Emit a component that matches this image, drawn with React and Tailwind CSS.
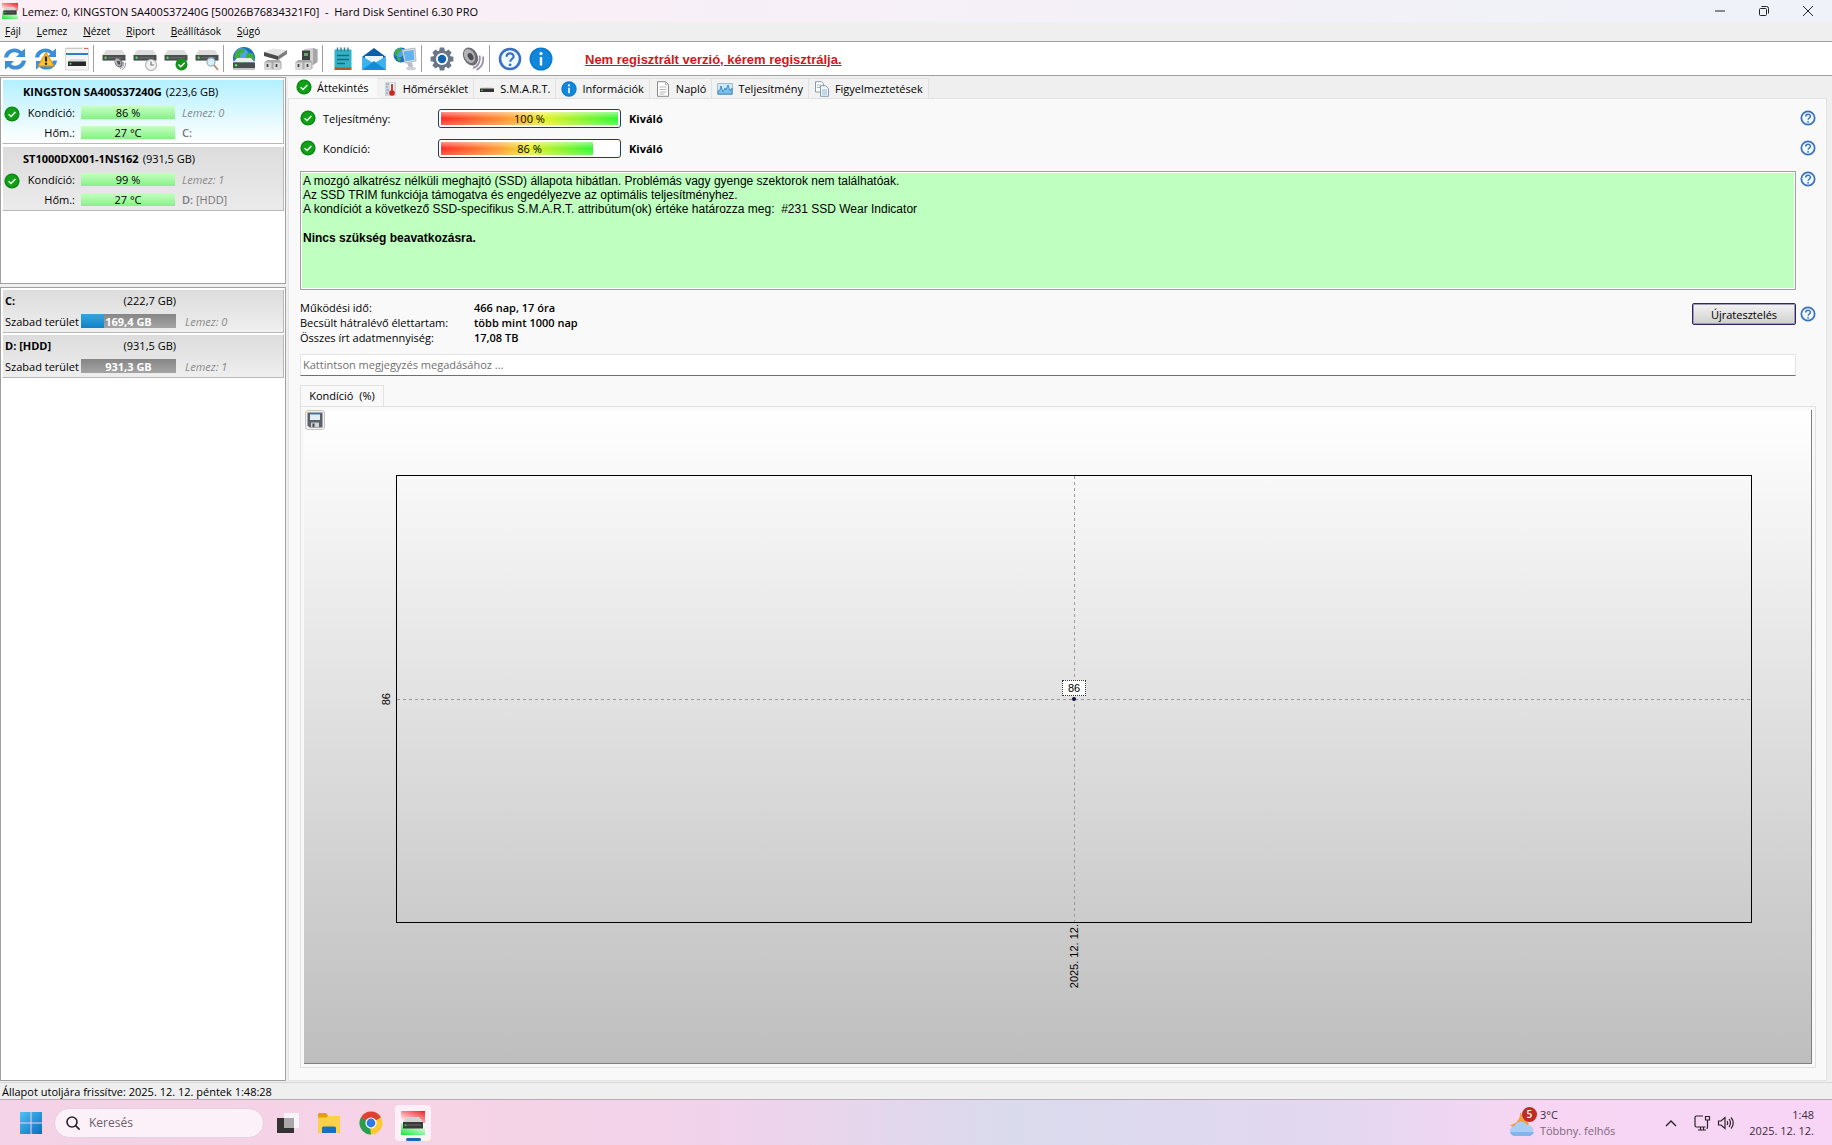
import React, { useState } from 'react';

const ARIAL = 'font-["Liberation_Sans",Arial,sans-serif]';

/* ---------- Icons ---------- */

function CheckIcon({ className = 'size-4' }) {
    return (
        <svg viewBox="0 0 16 16" className={className}>
            <circle cx="8" cy="8" r="7.6" fill="#0c8a12" />
            <circle cx="8" cy="8" r="6" fill="#12a01a" />
            <path d="M4.6 8.2 7 10.5l4.4-4.6" fill="none" stroke="#e9ffe6" strokeWidth="1.5" />
        </svg>
    );
}

function HelpIcon({ className = 'size-4' }) {
    return (
        <svg viewBox="0 0 24 24" className={className}>
            <circle cx="12" cy="12" r="10" fill="#eefaff" stroke="#3b6fc4" strokeWidth="2.6" />
            <path d="M8.6 9.8c0-4.6 7-4.4 7-.4 0 2.6-3.4 2.6-3.4 5.4" fill="none" stroke="#3b6fc4" strokeWidth="2.2" />
            <circle cx="12.1" cy="17.8" r="1.4" fill="#3b6fc4" />
        </svg>
    );
}

function InfoIcon({ className = 'size-4' }) {
    return (
        <svg viewBox="0 0 24 24" className={className}>
            <circle cx="12" cy="12" r="11.5" fill="#0a7bd0" />
            <circle cx="12" cy="12" r="9.8" fill="#1187dc" />
            <circle cx="12" cy="6.6" r="1.6" fill="#fff" />
            <path d="M12 10v8.5" stroke="#fff" strokeWidth="2.4" />
        </svg>
    );
}

function SentinelIcon({ className }) {
    return (
        <svg viewBox="0 0 24 24" className={className}>
            <defs>
                <linearGradient id="sen-a" x1="0.2" y1="1" x2="1" y2="0">
                    <stop offset="0" stopColor="#fff" />
                    <stop offset="1" stopColor="#ee1c24" />
                </linearGradient>
                <linearGradient id="sen-b" x1="0" y1="1" x2="0.7" y2="0">
                    <stop offset="0" stopColor="#14e632" />
                    <stop offset="1" stopColor="#fff" />
                </linearGradient>
            </defs>
            <path d="M0 0h24v12H0z" fill="url(#sen-a)" />
            <path d="M0 12h24v12H0z" fill="url(#sen-b)" />
            <path d="M6 6h12l4 5H2z" fill="#d4d4d4" />
            <path d="M2 11h20v6.500H2z" fill="#3a3a3a" />
            <path d="M6 14h14" stroke="#6a6a6a" strokeWidth="1" />
            <circle cx="4.500" cy="14.200" r="1" fill="#3ce04a" />
        </svg>
    );
}

function RefreshArrows() {
    return (
        <g fill="#3a8fd6">
            <path d="M1 10.5C1.6 5 6 1.4 11.5 1.4c3 0 5.3 1 7.2 2.9L22 1.5v8.6h-9l3.2-3C15 6 13.5 5.3 11.6 5.3c-3.2 0-5.8 2-6.5 5.2z" />
            <path d="M23 13.5C22.4 19 18 22.6 12.5 22.6c-3 0-5.3-1-7.2-2.9L2 22.5v-8.6h9l-3.2 3c1.2 1.1 2.7 1.8 4.6 1.8 3.2 0 5.8-2 6.5-5.2z" />
        </g>
    );
}

function Drive() {
    return (
        <>
            <path d="M4 3h16l3.5 5H.5z" fill="#dcdcdc" />
            <path d="M.5 8h23v5.6H.5z" fill="#4a4f50" />
            <path d="M6 10.8h15" stroke="#6c7172" strokeWidth="1" />
            <circle cx="3.6" cy="10.8" r="1.2" fill="#55dd55" />
        </>
    );
}

function Speaker() {
    return (
        <>
            <ellipse cx="9.5" cy="9.5" rx="7" ry="9.500" transform="rotate(-28 9.5 9.5)" fill="#6e6e70" />
            <ellipse cx="8.500" cy="9" rx="5" ry="7.400" transform="rotate(-28 8.5 9)" fill="#b4b4b6" />
            <ellipse cx="9.600" cy="9.600" rx="2.600" ry="3.800" transform="rotate(-28 9.6 9.6)" fill="#4c4c50" />
            <path d="M12 21c4.500-1 8-6 6.500-12.500M15.500 23c4.500-2.500 7.500-7.500 6.500-13.500" fill="none" stroke="#9a90aa" strokeWidth="1.800" />
        </>
    );
}

function Globe({ cx, cy, r }) {
    return (
        <g transform={`translate(${cx - r} ${cy - r}) scale(${r / 10})`}>
            <circle cx="10" cy="10" r="10" fill="#1c6fc8" />
            <circle cx="8" cy="7" r="6" fill="#4ba4ec" />
            <path d="M3 4c3-3 6-3 8-2l-1 3-3 1-1 4-3 1-2-2zM13 5l5 1 1.500 5-3 4-3-2-2-4z" fill="#3fae3a" />
            <path d="M5 12l4 1 1 3-2 3-3-3z" fill="#3fae3a" />
        </g>
    );
}

// Connector block shared by the two "attached disk" icons
function Plug() {
    return (
        <>
            <path d="m1.500 15 3-2h12l2 2v6.500l-1.500 1H1.500z" fill="#a9a9a9" />
            <path d="M1.500 15.500h7v7h-7zM10.500 15.500h7v7h-7z" fill="#d6d6d6" />
            <path d="M4.500 17v3M13.500 17v3" stroke="#3c3c3c" strokeWidth="1.600" />
        </>
    );
}

const icons = {
    refresh: <RefreshArrows />,
    refreshWarn: (
        <>
            <RefreshArrows />
            <path d="M12 5.500 20 19H4z" fill="#ffc52e" stroke="#e8960c" strokeWidth="1.200" strokeLinejoin="round" />
            <path d="M12 9.500v5" stroke="#222" strokeWidth="2.200" />
            <circle cx="12" cy="16.800" r="1.200" fill="#222" />
        </>
    ),
    details: (
        <>
            <path d="M.5 1h23v22H.5z" fill="#f4f4f4" stroke="#dadada" />
            <path d="M1 1.500h16" stroke="#c9c9c9" />
            <path d="M19 1.500h4" stroke="#d9694a" />
            <path d="M1 7h22" stroke="#2f7fc4" strokeWidth="2" />
            <path d="M5 12h14l2 3H3z" fill="#dcdcdc" />
            <path d="M3 14.500h18V19H3z" fill="#262a2a" />
            <circle cx="5.500" cy="16.800" r="1" fill="#5e5" />
        </>
    ),
    diskSound: (
        <>
            <Drive />
            <g transform="translate(11.500 10.500) scale(.54)"><Speaker /></g>
        </>
    ),
    diskClock: (
        <>
            <Drive />
            <circle cx="18" cy="18" r="5.500" fill="#f2f2f2" stroke="#b5b5b5" strokeWidth="1.200" />
            <path d="M18 14.500V18h3" fill="none" stroke="#777" strokeWidth="1.200" />
        </>
    ),
    diskCheck: (
        <>
            <Drive />
            <circle cx="17.500" cy="17.500" r="6" fill="#12941a" />
            <path d="m14.500 17.500 2.200 2.200 4-4" fill="none" stroke="#fff" strokeWidth="1.500" />
        </>
    ),
    diskSearch: (
        <>
            <Drive />
            <circle cx="16" cy="15" r="4" fill="#d8eefa" stroke="#9ab2c4" strokeWidth="1.300" />
            <path d="m19 18 4 5" stroke="#b88a70" strokeWidth="1.800" />
        </>
    ),
    diskGlobe: (
        <>
            <Globe cx={12} cy={11} r={11} />
            <path d="M5 11h14l4 4.500H1z" fill="#ececec" />
            <path d="M1 15.500h22V21H1z" fill="#4a4e4e" />
            <path d="M1 22h22" stroke="#c4c4c4" strokeWidth="2" />
            <circle cx="4" cy="18.300" r="1.200" fill="#5e5" />
        </>
    ),
    diskUsers: (
        <>
            <path d="m1 5 9-3.500L24 3l-9 6z" fill="#e4e4e4" />
            <path d="m1 5 14 4v4L1 9z" fill="#4c4c4c" />
            <path d="m15 9 9-6v4l-9 6z" fill="#7c7c7c" />
            <Plug />
        </>
    ),
    diskTower: (
        <>
            <path d="m10 2 9-1 4.500 1.500V15L19 18h-9z" fill="#cfcfcf" />
            <path d="m19 1 4.500 1.500V15L19 18z" fill="#a6a6a6" />
            <path d="M8 3.500h8V14H8z" fill="#3e4242" />
            <path d="M10 6h4v3h-4z" fill="#63a863" />
            <Plug />
        </>
    ),
    notepad: (
        <>
            <path d="M3.500 2.500h17V21h-17z" fill="#34b3c8" />
            <path d="M3.500 20.500h17V23h-17z" fill="#b3562c" />
            <path d="M6.500.5v4M10 .5v4M13.500.5v4M17 .5v4" stroke="#2c7f92" strokeWidth="1.400" />
            <path d="M6 8.500h12M6 12.500h12M6 16.500h8" stroke="#0e6b80" strokeWidth="1.500" />
        </>
    ),
    mail: (
        <>
            <path d="M.5 9.500 12 1l11.500 8.500V23H.5z" fill="#0b5fa8" />
            <path d="M3 9h18v8H3z" fill="#e8f5ff" />
            <path d="M.5 9.500 12 16.500 23.500 9.500V23H.5z" fill="#3bb0ee" />
            <path d="M.5 23 12 14l11.500 9z" fill="#148ad8" />
        </>
    ),
    network: (
        <>
            <Globe cx={8} cy={8} r={7.5} />
            <path d="m9 3 13-2 1 13-11 2z" fill="#d8dce0" stroke="#a9afb8" strokeWidth=".8" />
            <path d="m10.500 4.500 10-1.600.8 9.800-8.600 1.500z" fill="#5fb4f0" />
            <path d="m14 16 5-1 1 5-4 1z" fill="#b9bec8" />
            <ellipse cx="18" cy="21.500" rx="5" ry="1.800" fill="#cdd0d8" />
        </>
    ),
    gear: (
        <>
            <g fill="#6b7786">
                <circle cx="12" cy="12" r="8.800" />
                {[0, 45, 90, 135].map((angle) => (
                    <path key={angle} d="M9.800.6h4.400l.8 4h-6zM9.800 23.400h4.400l.8-4h-6z" transform={`rotate(${angle} 12 12)`} />
                ))}
            </g>
            <circle cx="12" cy="12" r="6" fill="#fff" />
            <circle cx="12" cy="12" r="4.200" fill="#1562ae" />
        </>
    ),
    speaker: <Speaker />,
};

function ToolIcon({ name }) {
    if (name === 'help') return <HelpIcon className="size-6" />;
    if (name === 'info') return <InfoIcon className="size-6" />;
    return <svg viewBox="0 0 24 24" className="size-6">{icons[name]}</svg>;
}

const tabIcons = {
    check: <CheckIcon />,
    info: <InfoIcon />,
    thermo: (
        <svg viewBox="0 0 16 16" className="size-4">
            <path d="M3 1h11v14H3z" fill="#cfd8e2" />
            <path d="M4 3h3M4 6h2M4 9h3M4 12h2" stroke="#8a98a8" />
            <path d="M10 2v9" stroke="#fff" strokeWidth="3.600" />
            <path d="M10 3v8" stroke="#d23a2a" strokeWidth="2" />
            <circle cx="10" cy="12" r="2.800" fill="#c8281c" />
        </svg>
    ),
    smart: (
        <svg viewBox="0 0 16 16" className="size-4">
            <path d="M3 6h10l2 2H1z" fill="#ddd" />
            <path d="M1 7.500h14V11H1z" fill="#333" />
            <circle cx="3" cy="9.200" r=".8" fill="#5e5" />
        </svg>
    ),
    log: (
        <svg viewBox="0 0 16 16" className="size-4">
            <path d="M2.500.7h8l3 3v11.600h-11z" fill="#fff" stroke="#8a8a8a" />
            <path d="M10.500.7v3h3M4.500 6h7M4.500 8.500h7M4.500 11h7M4.500 13h5" fill="none" stroke="#a5a5a5" strokeWidth=".8" />
        </svg>
    ),
    chart: (
        <svg viewBox="0 0 16 16" className="size-4">
            <path d="M.5 2.500h15v11H.5z" fill="#cfe7f7" stroke="#a3bccc" />
            <path d="m1 10 2-1 1-4 2 6 2-4 1 2 2-5 2 6 2-3v6H1z" fill="#7fc0ea" stroke="#2b83c4" strokeWidth=".8" />
        </svg>
    ),
    copy: (
        <svg viewBox="0 0 16 16" className="size-4">
            <path d="M1.500.7h6l2 2V11h-8z" fill="#fff" stroke="#8a9aa8" />
            <path d="M6.500 4.700h5l3 3v7.600h-8z" fill="#eef6fc" stroke="#8a9aa8" />
            <path d="M3 4h4M3 6.500h3M8 9h5M8 11h5M8 13h5" stroke="#7fa8cc" strokeWidth=".8" />
        </svg>
    ),
};

/* ---------- Data ---------- */

const menuItems = ['Fájl', 'Lemez', 'Nézet', 'Riport', 'Beállítások', 'Súgó'];

const toolbarGroups = [
    ['refresh', 'refreshWarn', 'details'],
    ['diskSound', 'diskClock', 'diskCheck', 'diskSearch'],
    ['diskGlobe', 'diskUsers', 'diskTower'],
    ['notepad', 'mail', 'network'],
    ['gear', 'speaker'],
    ['help', 'info'],
];

const tabs = [
    { label: 'Áttekintés', icon: 'check' },
    { label: 'Hőmérséklet', icon: 'thermo' },
    { label: 'S.M.A.R.T.', icon: 'smart' },
    { label: 'Információk', icon: 'info' },
    { label: 'Napló', icon: 'log' },
    { label: 'Teljesítmény', icon: 'chart' },
    { label: 'Figyelmeztetések', icon: 'copy' },
];

const disks = [
    { name: 'KINGSTON SA400S37240G', size: '(223,6 GB)', health: '86 %', temp: '27 °C', index: 'Lemez: 0', letter: 'C:' },
    { name: 'ST1000DX001-1NS162', size: '(931,5 GB)', health: '99 %', temp: '27 °C', index: 'Lemez: 1', letter: 'D:', volume: '[HDD]' },
];

const volumes = [
    { name: 'C:', size: '(222,7 GB)', free: '169,4 GB', used: 24, index: 'Lemez: 0' },
    { name: 'D: [HDD]', size: '(931,5 GB)', free: '931,3 GB', used: 0, index: 'Lemez: 1' },
];

const stats = [
    ['Működési idő:', '466 nap, 17 óra'],
    ['Becsült hátralévő élettartam:', 'több mint 1000 nap'],
    ['Összes írt adatmennyiség:', '17,08 TB'],
];

/* ---------- Window chrome ---------- */

function TitleBar() {
    return (
        <header className="flex h-[22px] items-center bg-linear-to-r from-[#fdeef6] to-[#eff2f9] pl-[2px]">
            <SentinelIcon className="mr-1 h-4 w-4" />
            <h1 className="flex-1 whitespace-pre">
                {'Lemez: 0, KINGSTON SA400S37240G [50026B76834321F0]  -  Hard Disk Sentinel 6.30 PRO'}
            </h1>
            <button aria-label="Kis méret" className="flex w-11 justify-center">
                <svg viewBox="0 0 12 12" className="size-3"><path d="M1 6h10" stroke="#222" /></svg>
            </button>
            <button aria-label="Előző méret" className="flex w-11 justify-center">
                <svg viewBox="0 0 12 12" className="size-3">
                    <rect x="1.500" y="3.500" width="7" height="7" rx="1" fill="none" stroke="#222" />
                    <path d="M3.500 1.500h5a2 2 0 0 1 2 2v5" fill="none" stroke="#222" />
                </svg>
            </button>
            <button aria-label="Bezárás" className="mr-[2px] flex w-11 justify-center">
                <svg viewBox="0 0 12 12" className="size-3"><path d="m1 1 10 10M11 1 1 11" stroke="#222" /></svg>
            </button>
        </header>
    );
}

function MenuBar() {
    return (
        <nav className="flex h-[20px] items-center gap-4 border-b border-[#a0a0a0] bg-[#efefef] pl-[5px] text-[10px]">
            {menuItems.map((item) => (
                <button key={item}>
                    <span className="underline">{item[0]}</span>{item.slice(1)}
                </button>
            ))}
        </nav>
    );
}

function Toolbar() {
    return (
        <div className="flex h-[34px] items-center border-b border-[#a0a0a0] bg-white">
            {toolbarGroups.map((group, i) => (
                <div
                    key={i}
                    className={`flex h-[27px] items-center gap-[7px] ${i === 0 ? 'pl-[3px]' : 'pl-2'} ${i < toolbarGroups.length - 1 ? 'border-r border-[#a0a0a0] pr-1' : ''}`}
                >
                    {group.map((name) => (
                        <button key={name} aria-label={name}><ToolIcon name={name} /></button>
                    ))}
                </div>
            ))}
            <a href="#register" className={`ml-8 pt-[2px] ${ARIAL} text-[13px] font-bold text-[#d01818] underline`}>
                Nem regisztrált verzió, kérem regisztrálja.
            </a>
        </div>
    );
}

/* ---------- Left side ---------- */

function Meter({ children }) {
    return (
        <div className="flex h-[13px] w-[94px] items-center justify-center bg-linear-to-b from-[#c6ffc2] to-[#84f284]">
            {children}
        </div>
    );
}

function DiskCard({ disk, selected, onSelect }) {
    return (
        <button
            onClick={onSelect}
            className={`block w-full border border-t-white border-r-[#b8b8b8] border-b-[#b8b8b8] border-l-white py-px pl-px text-left ${selected ? 'bg-linear-to-b from-[#b2f0ff] to-white' : 'bg-linear-to-b from-[#dcdcdc] to-[#ebebeb]'}`}
        >
            <div className="mb-px flex h-5 items-center gap-1 pl-[19px]">
                <b>{disk.name}</b>
                <span>{disk.size}</span>
            </div>
            <div className="flex h-5 items-center">
                <CheckIcon className="mt-1 size-4" />
                <span className="mr-[6px] w-[55px] text-right">Kondíció:</span>
                <Meter>{disk.health}</Meter>
                <i className="ml-[7px] text-[#8a8a8a]">{disk.index}</i>
            </div>
            <div className="flex h-5 items-center pl-4">
                <span className="mr-[6px] w-[55px] text-right">Hőm.:</span>
                <Meter>{disk.temp}</Meter>
                <span className="ml-[7px] text-[#777]">
                    <b className="font-semibold">{disk.letter}</b> {disk.volume}
                </span>
            </div>
        </button>
    );
}

function VolumeCard({ volume }) {
    return (
        <div className="border border-t-white border-r-[#b8b8b8] border-b-[#b8b8b8] border-l-white bg-linear-to-b from-[#dcdcdc] to-[#efefef] pl-[2px]">
            <div className="flex h-5 w-[171px] items-center justify-between">
                <b>{volume.name}</b>
                <span>{volume.size}</span>
            </div>
            <div className="flex h-[22px] items-center">
                <span className="w-[76px] whitespace-nowrap">Szabad terület</span>
                <div className="relative flex h-[14px] w-[95px] items-center justify-center bg-linear-to-b from-[#868686] to-[#a4a4a4]">
                    <div className="absolute inset-y-0 left-0 bg-linear-to-b from-[#36a5dc] to-[#0c82c6]" style={{ width: `${volume.used}%` }} />
                    <b className="relative text-white">{volume.free}</b>
                </div>
                <i className="ml-[9px] text-[#8a8a8a]">{volume.index}</i>
            </div>
        </div>
    );
}

function Sidebar() {
    const [selected, setSelected] = useState(0);

    return (
        <aside className="flex w-[286px] shrink-0 flex-col gap-[3px]">
            <div className="flex min-h-[207px] flex-col gap-[2px] border border-[#a0a0a0] bg-white p-px">
                {disks.map((disk, i) => (
                    <DiskCard key={disk.name} disk={disk} selected={i === selected} onSelect={() => setSelected(i)} />
                ))}
            </div>
            <div className="flex flex-1 flex-col gap-px border border-[#a0a0a0] bg-white p-px">
                {volumes.map((volume) => (
                    <VolumeCard key={volume.name} volume={volume} />
                ))}
            </div>
        </aside>
    );
}

/* ---------- Overview ---------- */

function HelpButton() {
    return <button aria-label="Súgó" className="flex w-6 justify-center"><HelpIcon /></button>;
}

function Rating({ label, value }) {
    return (
        <div className="flex h-[30px] items-center">
            <CheckIcon />
            <span className="ml-[7px] w-[115px]">{label}</span>
            <div className="relative h-[19px] w-[183px] rounded-[3px] border border-[#1f3f60] bg-white p-[2px]">
                <div
                    className="h-full bg-[linear-gradient(to_bottom,rgba(255,255,255,.5),transparent_50%,rgba(255,255,255,.25)),linear-gradient(to_right,#ff2a20,#ff9a30_38%,#e8f020_58%,#30f830)]"
                    style={{ width: `${value}%` }}
                />
                <span className="absolute inset-0 flex items-center justify-center">{value} %</span>
            </div>
            <b className="ml-2 flex-1">Kiváló</b>
            <HelpButton />
        </div>
    );
}

function Chart() {
    return (
        <div className={`flex flex-1 flex-col border-r border-b border-[#808080] bg-linear-to-b from-white to-[#bebebe] pr-[59px] ${ARIAL} text-[11px]`}>
            <div className="h-[65px] pl-px">
                <button aria-label="Mentés" className="flex size-5 items-center justify-center rounded-[3px] border border-[#c4c4c4] bg-[#f2f2f2]">
                    <svg viewBox="0 0 16 16" className="size-4">
                        <path d="M.5.5h15v15H2.500l-2-2z" fill="#5b6168" />
                        <path d="M3 1h10v7H3z" fill="#e4edf2" />
                        <path d="M3 1h10v1.500H3z" fill="#2f7fb4" />
                        <path d="M4 10.500h8V15H4z" fill="#d0d4d8" />
                        <path d="M5.500 11.500h2V15h-2z" fill="#444" />
                    </svg>
                </button>
            </div>
            <div className="flex flex-1">
                <div className="flex w-[92px] items-center justify-end pr-1">
                    <span className="rotate-180 leading-3 [writing-mode:vertical-rl]">86</span>
                </div>
                <div className="relative flex-1 border border-black">
                    <svg className="absolute inset-0 size-full overflow-visible">
                        <g stroke="#9a9a9a" strokeDasharray="3 3" shapeRendering="crispEdges">
                            <line x1="0" y1="50%" x2="100%" y2="50%" />
                            <line x1="50%" y1="0" x2="50%" y2="100%" />
                        </g>
                        <circle cx="50%" cy="50%" r="2" fill="#101040" />
                    </svg>
                    <span className="absolute bottom-1/2 left-1/2 mb-[3px] flex h-4 w-6 -translate-x-1/2 items-center justify-center border border-dotted border-[#333] bg-white">
                        86
                    </span>
                </div>
            </div>
            <div className="flex h-[140px] justify-center pt-px pl-[92px]">
                <span className="h-fit rotate-180 leading-3 [writing-mode:vertical-rl]">2025. 12. 12.</span>
            </div>
        </div>
    );
}

function Overview() {
    return (
        <section className="flex flex-1 flex-col border border-[#e2e2e2] bg-[#f9f9f9] pt-[4px] pr-[6px] pb-3 pl-[11px]">
            <Rating label="Teljesítmény:" value={100} />
            <Rating label="Kondíció:" value={86} />

            <div className="mt-[8px] flex items-start">
                <div className={`h-[119px] flex-1 border border-[#a0a0a0] bg-[#bfffbf] p-[2px] ${ARIAL} text-[12px] leading-[14px] ring-1 ring-white ring-inset`}>
                    <p>A mozgó alkatrész nélküli meghajtó (SSD) állapota hibátlan. Problémás vagy gyenge szektorok nem találhatóak.</p>
                    <p>Az SSD TRIM funkciója támogatva és engedélyezve az optimális teljesítményhez.</p>
                    <p className="whitespace-pre-wrap">{'A kondíciót a következő SSD-specifikus S.M.A.R.T. attribútum(ok) értéke határozza meg:  #231 SSD Wear Indicator'}</p>
                    <p className="mt-[15px] font-bold">Nincs szükség beavatkozásra.</p>
                </div>
                <HelpButton />
            </div>

            <div className="mt-[10px] flex items-start">
                <dl className="grid flex-1 grid-cols-[174px_1fr]">
                    {stats.map(([label, value]) => (
                        <React.Fragment key={label}>
                            <dt className="whitespace-nowrap">{label}</dt>
                            <dd className="font-semibold">{value}</dd>
                        </React.Fragment>
                    ))}
                </dl>
                <div className="flex items-center pt-[3px]">
                    <button className="h-[22px] w-[104px] rounded-[2px] border border-[#2f2a66] bg-linear-to-b from-[#f4f4f4] to-[#cfcfcf] shadow-[inset_0_0_0_1px_#9c9ab4]">
                        Újratesztelés
                    </button>
                    <HelpButton />
                </div>
            </div>

            <input
                aria-label="Megjegyzés"
                placeholder="Kattintson megjegyzés megadásához ..."
                className="mt-[9px] mr-6 h-[22px] border border-[#e4e4e4] border-b-[#707070] bg-white px-[2px] pb-[2px] placeholder:text-[#707070]"
            />

            <div className="mt-[9px] mr-1 flex flex-1 flex-col">
                <div className="flex">
                    <button className="-mb-px h-[22px] w-[84px] whitespace-pre border border-b-0 border-[#e2e2e2] bg-[#f9f9f9] pb-[2px]">{'Kondíció  (%)'}</button>
                </div>
                <div className="flex flex-1 flex-col border border-[#e2e2e2] p-[3px]">
                    <Chart />
                </div>
            </div>
        </section>
    );
}

function MainPanel() {
    const [active, setActive] = useState(0);

    return (
        <main className="mr-[5px] ml-[2px] flex flex-1 flex-col">
            <div role="tablist" className="flex h-[21px] items-end">
                {tabs.map((tab, i) => (
                    <button
                        key={tab.label}
                        role="tab"
                        aria-selected={i === active}
                        onClick={() => setActive(i)}
                        className={`flex items-center gap-[5px] ${i === active ? '-mb-px h-[21px] bg-[#f9f9f9] px-2 pb-[3px]' : 'h-5 border-t border-r border-[#e2e2e2] bg-[#f2f2f2] px-[5px]'}`}
                    >
                        {tabIcons[tab.icon]}
                        {tab.label}
                    </button>
                ))}
            </div>
            <Overview />
        </main>
    );
}

/* ---------- Taskbar ---------- */

function Taskbar() {
    return (
        <footer className="flex h-[46px] items-center border-t border-[#b8aab4] bg-[linear-gradient(to_right,#f4d2e7,#f6d3e5_25%,#f0d3ec_40%,#dadaed_55%,#e2d8f0_72%,#f7d5f3_84%,#f8d5f6)] pl-5 text-[#3a2e3a]">
            <button aria-label="Start">
                <svg viewBox="0 0 22 22" className="size-[22px]">
                    <defs>
                        <linearGradient id="win" x1="0" y1="0" x2="1" y2="1">
                            <stop offset="0" stopColor="#4cc2f4" />
                            <stop offset="1" stopColor="#0a6cc0" />
                        </linearGradient>
                    </defs>
                    <path d="M0 0h10.500v10.500H0zM11.500 0H22v10.500H11.500zM0 11.500h10.500V22H0zM11.500 11.500H22V22H11.500z" fill="url(#win)" />
                </svg>
            </button>
            <label className="ml-3 flex h-[30px] w-[210px] items-center rounded-full border border-[#e6cfe0] bg-[#fcf0f9] pl-[10px]">
                <svg viewBox="0 0 16 16" className="size-4" fill="none" stroke="#2a222a" strokeWidth="1.600">
                    <circle cx="7" cy="7" r="5" />
                    <path d="m10.600 10.600 4 4" />
                </svg>
                <input aria-label="Keresés" placeholder="Keresés" className="ml-2 w-32 text-[12px] placeholder:text-[#6a5f68]" />
            </label>
            <button aria-label="Feladatnézet" className="ml-3">
                <svg viewBox="0 0 24 24" className="size-6">
                    <path d="M8 2h15v15H8z" fill="#f8f5f8" />
                    <path d="M1 7h17v15H1z" fill="#333" />
                    <path d="M8 7h10v10H8z" fill="#aaa6aa" />
                </svg>
            </button>
            <button aria-label="Fájlkezelő" className="ml-[17px]">
                <svg viewBox="0 0 24 24" className="size-6">
                    <path d="M1 3.500Q1 2 2.500 2H9l2.500 3H23v17H1z" fill="#e0a010" />
                    <path d="M1 6.500h8L11 5h12v16q0 1-1 1H2q-1 0-1-1z" fill="#fcd04a" />
                    <path d="M5 22v-5q0-1.500 1.500-1.500h11Q19 15.500 19 17v5z" fill="#1670c4" />
                </svg>
            </button>
            <button aria-label="Chrome" className="ml-[18px]">
                <svg viewBox="0 0 24 24" className="size-6">
                    <path d="M12 12 2.040 6.250A11.500 11.500 0 0 1 21.960 6.250z" fill="#e0402f" />
                    <path d="M12 12V23.500A11.500 11.500 0 0 1 2.040 6.250z" fill="#25a04c" />
                    <path d="M12 12l9.960-5.750A11.500 11.500 0 0 1 12 23.500z" fill="#fcc934" />
                    <path d="M12 6.250h9.960L12 12zM7 15 2.040 6.250 12 12z" fill="#e0402f" />
                    <path d="M7 14.900 2.040 6.250 9 11z" fill="#25a04c" />
                    <path d="m17 14.900-5 8.600L11 15z" fill="#fcc934" />
                    <circle cx="12" cy="12" r="5.600" fill="#fff" />
                    <circle cx="12" cy="12" r="4.400" fill="#2f78e8" />
                </svg>
            </button>
            <button aria-label="Hard Disk Sentinel" className="relative ml-3 flex size-9 items-center justify-center rounded-[4px] bg-[#fcf0f9]">
                <SentinelIcon className="size-6" />
                <span className="absolute bottom-0 h-[3px] w-[15px] rounded-full bg-[#1a68b0]" />
            </button>

            <button className="ml-auto flex items-center gap-[5px] text-left leading-4">
                <span className="relative">
                    <svg viewBox="0 0 26 28" className="h-7 w-[26px]">
                        <path d="M11 3c1 6-3 12-10 13 6 6 15 5 19-1z" fill="#f0a03c" />
                        <path d="M6 27a5 5 0 0 1-.5-10 7 7 0 0 1 12.500-1 5.600 5.600 0 0 1 2 11z" fill="#a9cdf4" />
                        <path d="M6 27a5 5 0 0 1-4.500-4h23.500a5.600 5.600 0 0 1-5 4z" fill="#84b4ec" />
                    </svg>
                    <span className="absolute -top-[2px] -right-[2px] flex size-[15px] items-center justify-center rounded-full bg-[#c02a20] text-[10px] font-semibold text-white">5</span>
                </span>
                <span>
                    <span className="block">3°C</span>
                    <span className="block text-[#7a6a7c]">Többny. felhős</span>
                </span>
            </button>
            <button aria-label="Rejtett ikonok" className="ml-[50px]">
                <svg viewBox="0 0 12 12" className="size-3" fill="none" stroke="#2a222a" strokeWidth="1.400"><path d="m1 9 5-5 5 5" /></svg>
            </button>
            <button aria-label="Hálózat és hang" className="ml-4 flex gap-[6px]">
                <svg viewBox="0 0 18 18" className="size-[18px]" fill="none" stroke="#2a222a" strokeWidth="1.200">
                    <path d="M10 2H3.500Q2 2 2 3.500v8Q2 13 3.500 13h9M5 16h8M7.500 13v3M10.500 13v3M12.500 2.500h4V6h-4zM14.500 6v7.500q0 1-1 1" />
                </svg>
                <svg viewBox="0 0 18 18" className="size-[18px]" fill="none" stroke="#2a222a" strokeWidth="1.200">
                    <path d="M1.500 7v4h2.500l4 3.500v-11L4 7zM10 7q1.500 2 0 4M12 5q3 4 0 8M14 3.500q4.500 5.500 0 11" />
                </svg>
            </button>
            <button className="mr-[18px] ml-[14px] text-right leading-4">
                <span className="block">1:48</span>
                <span className="block">2025. 12. 12.</span>
            </button>
        </footer>
    );
}

export default function App() {
    return (
        <div className='flex min-h-screen flex-col bg-[#efefef] font-["Open_Sans","Noto_Sans",sans-serif] text-[11px] leading-[15px] text-black'>
            <TitleBar />
            <MenuBar />
            <Toolbar />
            <div className="flex flex-1 pt-px">
                <Sidebar />
                <MainPanel />
            </div>
            <div className="mt-px flex h-[17px] items-center border-t border-[#d8d8d8] pl-[2px]">
                Állapot utoljára frissítve: 2025. 12. 12. péntek 1:48:28
            </div>
            <Taskbar />
        </div>
    );
}
